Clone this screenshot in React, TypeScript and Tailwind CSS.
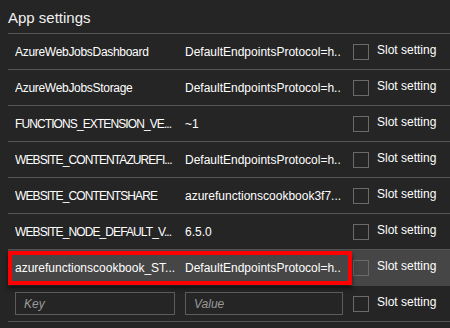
const rows = [
  { key: "AzureWebJobsDashboard", value: "DefaultEndpointsProtocol=h..", caps: false },
  { key: "AzureWebJobsStorage", value: "DefaultEndpointsProtocol=h..", caps: false },
  { key: "FUNCTIONS_EXTENSION_VE...", value: "~1", caps: true },
  { key: "WEBSITE_CONTENTAZUREFI...", value: "DefaultEndpointsProtocol=h..", caps: true },
  { key: "WEBSITE_CONTENTSHARE", value: "azurefunctionscookbook3f7...", caps: true },
  { key: "WEBSITE_NODE_DEFAULT_V...", value: "6.5.0", caps: true },
];

const Checkbox = () => (
  <div className="h-4 w-4 shrink-0 border border-[#6a6a6a]" />
);

const SlotSetting = () => (
  <div className="flex items-center gap-2">
    <Checkbox />
    <span className="-mt-[4px] whitespace-nowrap">Slot setting</span>
  </div>
);

export default function App() {
  return (
    <div
      className="h-[328px] w-[450px] overflow-hidden bg-[#252525] text-[12px] text-white"
      style={{ fontFamily: "'Liberation Sans', Arial, sans-serif" }}
    >
      <h2 className="px-2 pt-[7px] pb-[5px] text-[15px] leading-[21px] text-[#f0f0f0]">App settings</h2>
      <div className="ml-2 border-t border-[#555555]">
        {rows.map((row) => (
          <div key={row.key} className="flex h-[36px] items-center border-b border-[#555555] pl-[7px]">
            <div
              className={
                row.caps
                  ? "w-[170px] overflow-hidden whitespace-nowrap tracking-[-0.9px]"
                  : "w-[170px] overflow-hidden whitespace-nowrap tracking-[-0.3px]"
              }
            >
              {row.key}
            </div>
            <div className="w-[168px] overflow-hidden whitespace-nowrap">{row.value}</div>
            <SlotSetting />
          </div>
        ))}
        <div className="relative flex h-[36px] items-center bg-[#464646] pl-[7px]">
          <div className="absolute top-[1px] left-0 h-[34px] w-[344px] border-4 border-[#ff0000] shadow-[0_3px_4px_rgba(0,0,0,0.6)]" />
          <div className="w-[170px] overflow-hidden whitespace-nowrap">azurefunctionscookbook_ST...</div>
          <div className="w-[168px] overflow-hidden whitespace-nowrap">DefaultEndpointsProtocol=h..</div>
          <SlotSetting />
        </div>
        <div className="flex h-[36px] items-center border-b border-[#555555] pl-[7px]">
          <div className="w-[170px]">
            <input
              placeholder="Key"
              className="h-[23px] w-[160px] border border-[#5c5c5c] bg-transparent px-[8px] italic text-white outline-none placeholder:text-[#9a9a9a]"
            />
          </div>
          <div className="w-[168px]">
            <input
              placeholder="Value"
              className="h-[23px] w-[158px] border border-[#5c5c5c] bg-transparent px-[8px] italic text-white outline-none placeholder:text-[#9a9a9a]"
            />
          </div>
          <SlotSetting />
        </div>
      </div>
    </div>
  );
}
